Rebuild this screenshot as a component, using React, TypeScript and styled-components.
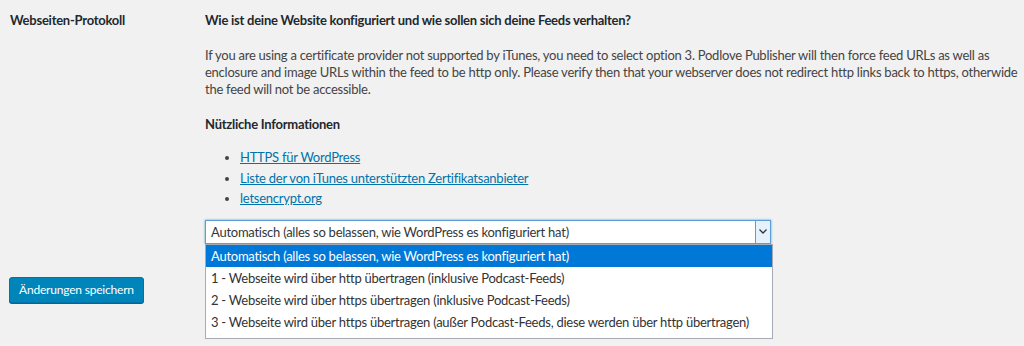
import styled, { createGlobalStyle } from 'styled-components';

const GlobalStyle = createGlobalStyle`
    html, body {
        margin: 0;
        padding: 0;
        background: #f1f1f1;
    }
    body {
        font-family: Lato, "Open Sans", sans-serif;
        font-size: 13px;
        letter-spacing: -0.25px;
        color: #444;
    }
`;

const Page = styled.main`
    padding: 0 0 0 10px;
    width: 1024px;
    height: 346px;
    box-sizing: border-box;
    overflow: hidden;
`;

const FormRow = styled.section`
    display: grid;
    grid-template-columns: 195px 1fr;
`;

const RowLabel = styled.h3`
    margin: 12px 0 0;
    font-size: 13px;
    font-weight: 700;
    color: #23282d;
    line-height: 17px;
`;

const Field = styled.div`
    padding-top: 12px;
`;

const Question = styled.p`
    margin: 0 0 18px;
    font-weight: 700;
    color: #23282d;
    line-height: 17px;
`;

const Description = styled.p`
    margin: 0 0 18px;
    line-height: 17px;
`;

const SubHeading = styled.h4`
    margin: 0;
    font-size: 13px;
    font-weight: 700;
    color: #23282d;
    line-height: 17px;
`;

const LinkList = styled.ul`
    margin: 14px 0 0;
    padding-left: 35px;
    list-style: disc;
`;

const LinkItem = styled.li`
    line-height: 20.5px;
    &::marker {
        color: #444;
    }
`;

const Link = styled.a`
    color: #0073aa;
    text-decoration: underline;
`;

const SelectWrap = styled.div`
    position: relative;
    width: 566px;
    margin-top: 11px;
`;

const SelectBox = styled.div`
    display: flex;
    align-items: center;
    height: 24px;
    box-sizing: border-box;
    border: 1px solid #5b9dd9;
    box-shadow: 0 0 2px rgba(30, 140, 190, 0.8);
    background: #fff;
    color: #32373c;
`;

const SelectValue = styled.span`
    flex: 1;
    padding-left: 5px;
    white-space: nowrap;
`;

const ArrowBox = styled.span`
    width: 15px;
    height: 22px;
    box-sizing: border-box;
    border-left: 1px solid #5b9dd9;
    background: #e5f1fb;
    display: flex;
    align-items: center;
    justify-content: center;
`;

const OptionList = styled.ul`
    position: absolute;
    top: 24px;
    left: 0;
    width: 568px;
    margin: 0;
    padding: 0 0 5px;
    list-style: none;
    background: #fff;
    border: 1px solid #a5acb5;
    box-sizing: border-box;
`;

const Option = styled.li<{ $active?: boolean }>`
    height: 22px;
    line-height: 22px;
    padding-left: 5px;
    white-space: nowrap;
    background: ${p => (p.$active ? '#0078d7' : '#fff')};
    color: ${p => (p.$active ? '#fff' : '#333')};
`;

const Submit = styled.div`
    margin-top: 33px;
`;

const Button = styled.button`
    font-family: inherit;
    font-size: 12px;
    letter-spacing: -0.2px;
    color: #fff;
    background: #0085ba;
    border: 1px solid #0073aa;
    border-radius: 3px;
    box-shadow: 0 1px 0 #006799;
    height: 26px;
    padding: 0 9px;
    margin-left: -1px;
`;

const options = [
    'Automatisch (alles so belassen, wie WordPress es konfiguriert hat)',
    '1 - Webseite wird über http übertragen (inklusive Podcast-Feeds)',
    '2 - Webseite wird über https übertragen (inklusive Podcast-Feeds)',
    '3 - Webseite wird über https übertragen (außer Podcast-Feeds, diese werden über http übertragen)',
];

export default function App() {
    return (
        <Page>
            <GlobalStyle />
            <FormRow>
                <RowLabel>Webseiten-Protokoll</RowLabel>
                <Field>
                    <Question>Wie ist deine Website konfiguriert und wie sollen sich deine Feeds verhalten?</Question>
                    <Description>
                        If you are using a certificate provider not supported by iTunes, you need to select option 3. Podlove
                        Publisher will then force feed URLs as well as enclosure and image URLs within the feed to be http only.
                        Please verify then that your webserver does not redirect http links back to https, otherwide the feed
                        will not be accessible.
                    </Description>
                    <SubHeading>Nützliche Informationen</SubHeading>
                    <LinkList>
                        <LinkItem>
                            <Link href="#">HTTPS für WordPress</Link>
                        </LinkItem>
                        <LinkItem>
                            <Link href="#">Liste der von iTunes unterstützten Zertifikatsanbieter</Link>
                        </LinkItem>
                        <LinkItem>
                            <Link href="#">letsencrypt.org</Link>
                        </LinkItem>
                    </LinkList>
                    <SelectWrap>
                        <SelectBox>
                            <SelectValue>{options[0]}</SelectValue>
                            <ArrowBox>
                                <svg width="8" height="5" viewBox="0 0 8 5">
                                    <path d="M0.5 0.5 L4 4 L7.5 0.5" fill="none" stroke="#333" strokeWidth="1.3" />
                                </svg>
                            </ArrowBox>
                        </SelectBox>
                        <OptionList>
                            {options.map((opt, i) => (
                                <Option key={opt} $active={i === 0}>
                                    {opt}
                                </Option>
                            ))}
                        </OptionList>
                    </SelectWrap>
                </Field>
            </FormRow>
            <Submit>
                <Button>Änderungen speichern</Button>
            </Submit>
        </Page>
    );
}
